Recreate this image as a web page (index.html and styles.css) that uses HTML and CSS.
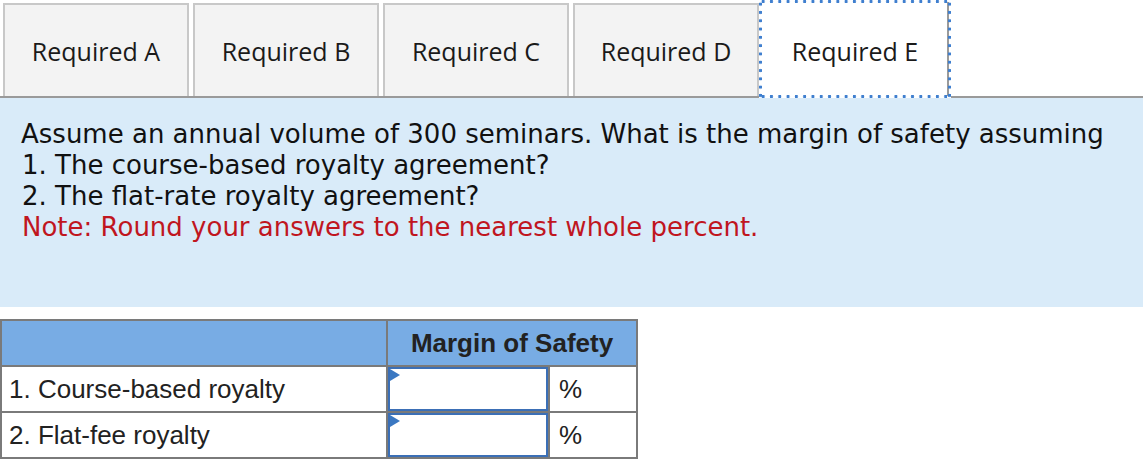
FILE: index.html
```html
<!DOCTYPE html>
<html>
<head>
<meta charset="utf-8">
<link rel="stylesheet" href="styles.css">
</head>
<body>
<div class="tabs">
  <div class="tab">Required A</div>
  <div class="tab">Required B</div>
  <div class="tab">Required C</div>
  <div class="tab">Required D</div>
  <div class="tab active">Required E</div>
</div>
<div class="panel">
  <p class="q">Assume an annual volume of 300 seminars. What is the margin of safety assuming</p>
  <p class="q item">1. The course-based royalty agreement?</p>
  <p class="q item">2. The flat-rate royalty agreement?</p>
  <p class="q note">Note: Round your answers to the nearest whole percent.</p>
</div>
<table class="grid">
  <colgroup><col class="c1"><col class="c2"><col class="c3"></colgroup>
  <tr class="head"><th></th><th colspan="2">Margin of Safety</th></tr>
  <tr><td class="label">1. Course-based royalty</td><td class="inp"><div class="field"><span class="flag"></span></div></td><td class="unit">%</td></tr>
  <tr><td class="label">2. Flat-fee royalty</td><td class="inp"><div class="field"><span class="flag"></span></div></td><td class="unit">%</td></tr>
</table>
</body>
</html>
```
FILE: styles.css
```css
html, body { margin: 0; padding: 0; background: #fff; }
body { width: 1143px; height: 463px; overflow: hidden; }

.tabs {
  display: flex;
  align-items: flex-end;
  height: 96px;
  padding-left: 3px;
  border-bottom: 2px solid #9a9a9a;
  position: relative;
}
.tab {
  box-sizing: border-box;
  width: 186px;
  height: 93px;
  margin-right: 4px;
  background: #f3f3f3;
  border: 2px solid #c8c8c8;
  border-bottom: none;
  display: flex;
  align-items: center;
  justify-content: center;
  font-family: "Open Sans", "Noto Sans", sans-serif;
  font-size: 25px;
  color: #1a1a1a;
}
.tab:nth-child(4) { margin-right: 0; }
.tab.active {
  width: 192px;
  height: 98px;
  margin-bottom: -2px;
  background: #fff;
  border: 2px solid #fff;
  box-shadow: inset -2px 0 0 #9a9a9a;
  position: relative;
  z-index: 1;
  padding-top: 4px;
}
.tab.active::after {
  content: "";
  position: absolute;
  left: -2px;
  top: -2px;
  right: -2px;
  bottom: -2px;
  pointer-events: none;
  background:
    radial-gradient(circle, #3f7fcf 1.4px, transparent 1.9px) 0 -1px / 8.3px 5px repeat-x,
    radial-gradient(circle, #3f7fcf 1.4px, transparent 1.9px) 0 calc(100% + 1px) / 8.3px 5px repeat-x,
    radial-gradient(circle, #3f7fcf 1.4px, transparent 1.9px) -1px 0 / 5px 8.3px repeat-y,
    radial-gradient(circle, #3f7fcf 1.4px, transparent 1.9px) calc(100% + 1px) 0 / 5px 8.3px repeat-y;
}

.panel {
  background: #d9ebf9;
  height: 209px;
  box-sizing: border-box;
  padding: 21px 0 0 21px;
}
.q {
  margin: 0;
  font-family: "DejaVu Sans", Verdana, sans-serif;
  font-size: 26px;
  line-height: 31px;
  color: #111;
}
.q.item { padding-left: 1px; }
.q.note { color: #c0161f; padding-left: 1px; }

.grid {
  margin-top: 12px;
  border-collapse: collapse;
  table-layout: fixed;
  width: 636px;
  font-family: "Liberation Sans", Arial, sans-serif;
  font-size: 26px;
  color: #222;
}
.c1 { width: 386px; }
.c2 { width: 162px; }
.c3 { width: 88px; }
.grid th, .grid td {
  border: 2px solid #7a7a7a;
  padding: 0;
}
.grid tr { height: 46px; }
.head th {
  background: #78ace4;
  font-weight: bold;
  text-align: center;
  color: #222;
}
.label { padding-left: 7px !important; }
.inp { vertical-align: top; }
.field {
  position: relative;
  box-sizing: border-box;
  height: 44px;
  border: 2px solid #3b6fb6;
}
.flag {
  position: absolute;
  left: 0;
  top: 0;
  width: 0;
  height: 0;
  border-left: 10px solid #3b78c2;
  border-top: 6px solid transparent;
  border-bottom: 6px solid transparent;
}
.unit { padding-left: 9px !important; }
```
